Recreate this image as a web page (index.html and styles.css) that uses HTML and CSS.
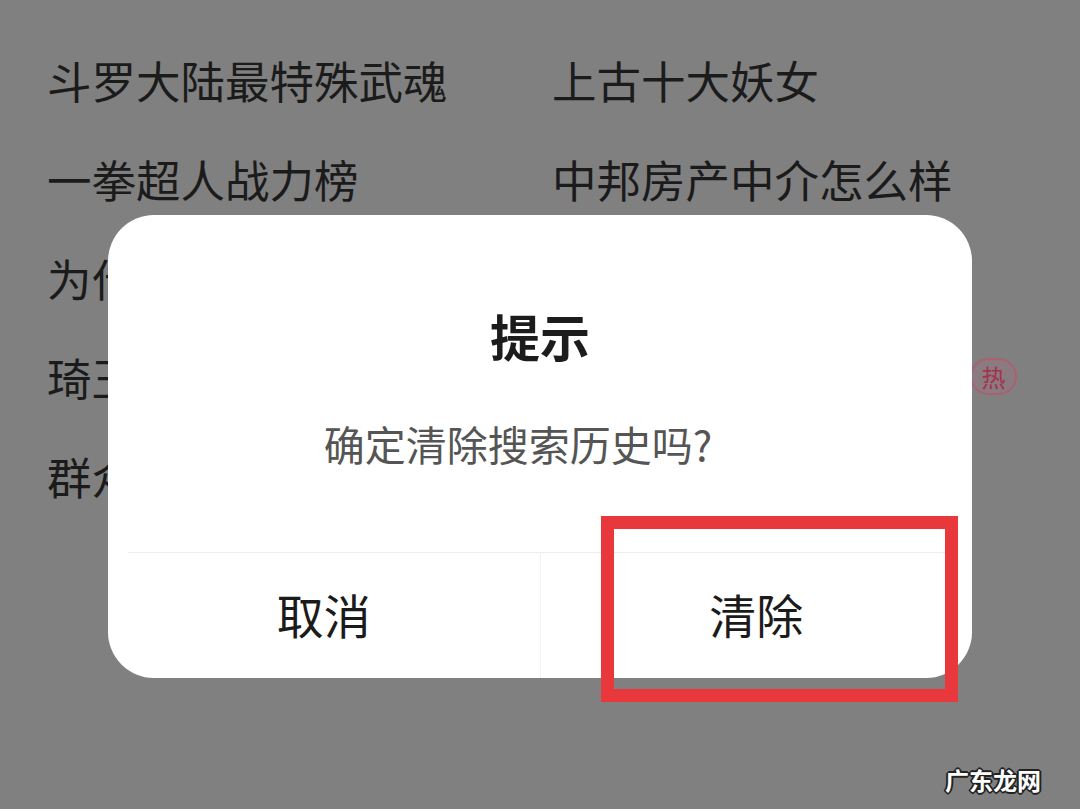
FILE: index.html
```html
<!DOCTYPE html>
<html>
<head>
    <meta charset="utf-8">
    <link rel="stylesheet" href="styles.css">
</head>
<body>
<div class="page">
    <ul class="history">
        <li class="item">斗罗大陆最特殊武魂</li>
        <li class="item">上古十大妖女</li>
        <li class="item">一拳超人战力榜</li>
        <li class="item">中邦房产中介怎么样</li>
        <li class="item">为什么有人不怕冷</li>
        <li class="item"></li>
        <li class="item">琦玉老师真正实力</li>
        <li class="item item-hot"><span class="hot">热</span></li>
        <li class="item">群众演员工资</li>
        <li class="item"></li>
    </ul>

    <div class="mask">
        <div class="dialog">
            <h3 class="dialog-title">提示</h3>
            <div class="dialog-message">确定清除搜索历史吗?</div>
            <div class="dialog-actions">
                <div class="action cancel">取消</div>
                <div class="action confirm">清除</div>
            </div>
            <div class="highlight"></div>
        </div>
    </div>

    <div class="watermark">广东龙网</div>
</div>
</body>
</html>
```

FILE: styles.css
```css
html, body {
    margin: 0;
    padding: 0;
}

body {
    width: 1080px;
    height: 809px;
    overflow: hidden;
    background: #808080;
    font-family: "Noto Sans CJK SC", "Noto Sans", sans-serif;
}

.page {
    position: relative;
    width: 1080px;
    height: 809px;
}

.history {
    list-style: none;
    margin: 0;
    padding: 30px 0 0 47px;
    display: grid;
    grid-template-columns: 505px 1fr;
}

.history .item {
    font-size: 44.5px;
    line-height: 99px;
    height: 99px;
    color: #1b1b1b;
    white-space: nowrap;
    display: flex;
    align-items: center;
}

.history .item-hot {
    padding-left: 418px;
}

.history .hot {
    display: inline-flex;
    align-items: center;
    justify-content: center;
    width: 47px;
    height: 37px;
    box-sizing: border-box;
    border: 2px solid #a9616f;
    border-radius: 19px;
    background: #8b7a7f;
    color: #a3324f;
    font-size: 24px;
    line-height: 1;
}

.mask {
    position: absolute;
    top: 0;
    left: 0;
    right: 0;
    bottom: 0;
    display: flex;
    flex-direction: column;
    align-items: center;
    padding-top: 215px;
}

.dialog {
    position: relative;
    width: 864px;
    height: 463px;
    background: #fff;
    border-radius: 46px;
    display: flex;
    flex-direction: column;
}

.dialog-title {
    margin: 0;
    padding-top: 90px;
    text-align: center;
    font-size: 50px;
    line-height: 60px;
    font-weight: 700;
    color: #1c1c1c;
}

.dialog-message {
    margin-top: 48px;
    padding-right: 44px;
    text-align: center;
    font-size: 41px;
    line-height: 60px;
    color: #555;
}

/* divider is inset from the rounded edges, the buttons are not */
.dialog-actions {
    margin-top: auto;
    height: 126px;
    display: flex;
    background: linear-gradient(#ececec, #ececec) 20px 0 / calc(100% - 40px) 1px no-repeat;
}

.dialog-actions .action {
    flex: 1;
    display: flex;
    align-items: center;
    justify-content: center;
    font-size: 47px;
    color: #1b1b1b;
    padding-bottom: 4px;
}

.dialog-actions .cancel {
    border-right: 1px solid #f2f2f2;
}

.highlight {
    position: absolute;
    left: 493px;
    top: 301px;
    width: 357px;
    height: 186px;
    box-sizing: border-box;
    border: 13px solid #e8383b;
}

.watermark {
    position: absolute;
    left: 945px;
    top: 762px;
    font-size: 24px;
    font-weight: 700;
    color: #fff;
    text-shadow: -2px 0 #222, 2px 0 #222, 0 -2px #222, 0 2px #222,
        -1px -1px #222, 1px 1px #222, -1px 1px #222, 1px -1px #222;
}
```
